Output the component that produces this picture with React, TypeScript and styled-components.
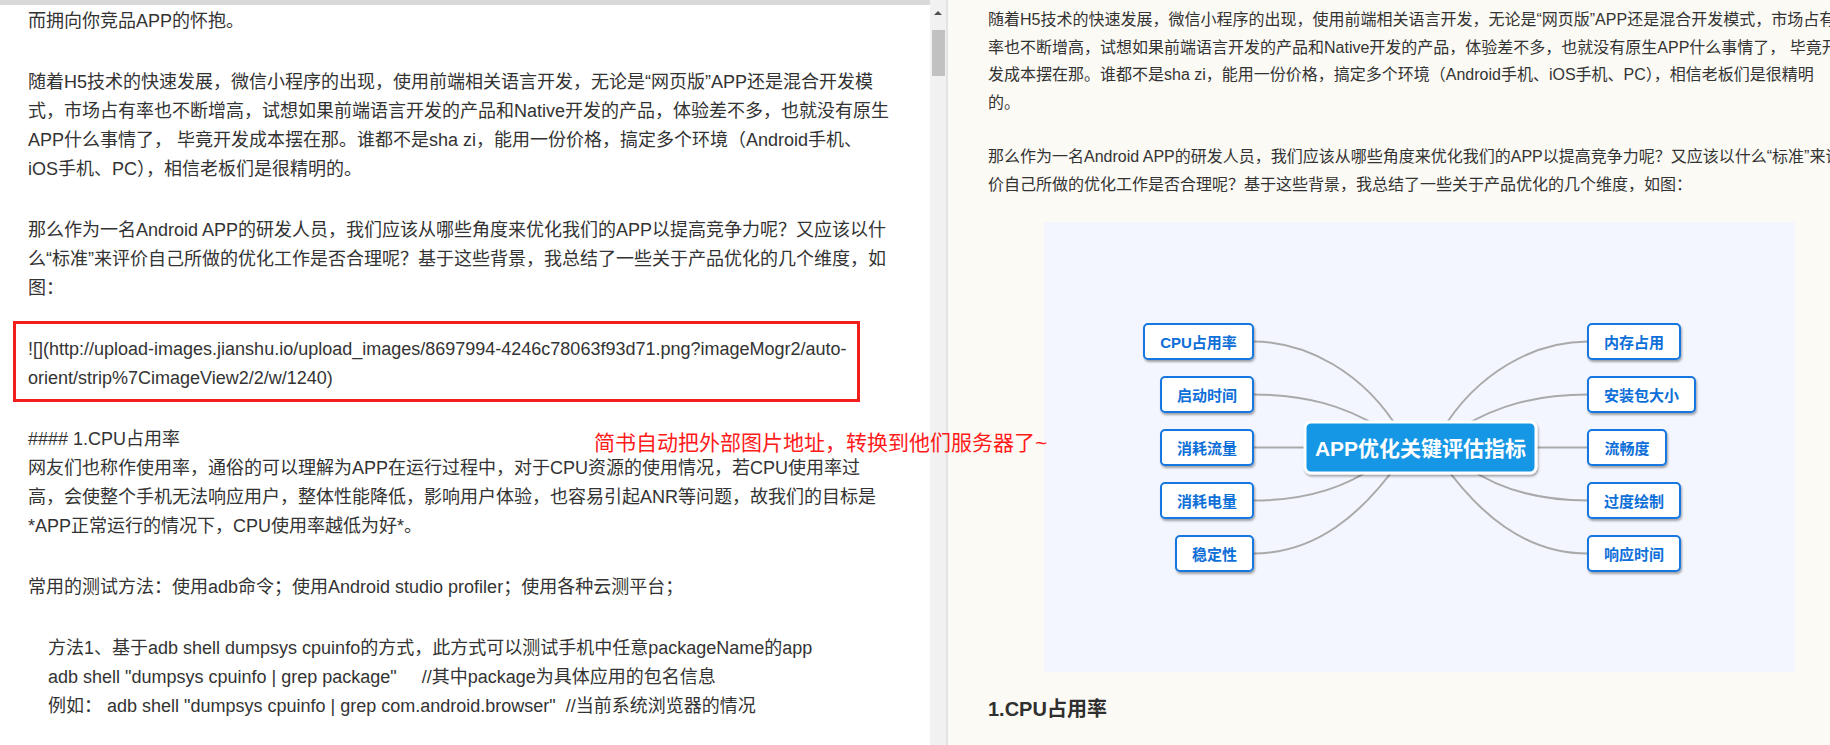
import React from 'react'
import styled, { createGlobalStyle } from 'styled-components'

const GlobalStyle = createGlobalStyle`
  html, body {
    margin: 0;
    padding: 0;
    background: #fff;
  }
  body {
    font-family: "Liberation Sans", "Noto Sans CJK SC", sans-serif;
  }
`

const editorParas: { lines: string[]; boxed?: boolean }[] = [
  { lines: ['而拥向你竞品APP的怀抱。'] },
  {
    lines: [
      '随着H5技术的快速发展，微信小程序的出现，使用前端相关语言开发，无论是“网页版”APP还是混合开发模',
      '式，市场占有率也不断增高，试想如果前端语言开发的产品和Native开发的产品，体验差不多，也就没有原生',
      'APP什么事情了， 毕竟开发成本摆在那。谁都不是sha zi，能用一份价格，搞定多个环境（Android手机、',
      'iOS手机、PC），相信老板们是很精明的。',
    ],
  },
  {
    lines: [
      '那么作为一名Android APP的研发人员，我们应该从哪些角度来优化我们的APP以提高竞争力呢？又应该以什',
      '么“标准”来评价自己所做的优化工作是否合理呢？基于这些背景，我总结了一些关于产品优化的几个维度，如',
      '图：',
    ],
  },
  {
    boxed: true,
    lines: [
      '![](http://upload-images.jianshu.io/upload_images/8697994-4246c78063f93d71.png?imageMogr2/auto-',
      'orient/strip%7CimageView2/2/w/1240)',
    ],
  },
  {
    lines: [
      '#### 1.CPU占用率',
      '网友们也称作使用率，通俗的可以理解为APP在运行过程中，对于CPU资源的使用情况，若CPU使用率过',
      '高，会使整个手机无法响应用户，整体性能降低，影响用户体验，也容易引起ANR等问题，故我们的目标是',
      '*APP正常运行的情况下，CPU使用率越低为好*。',
    ],
  },
  { lines: ['常用的测试方法：使用adb命令；使用Android studio profiler；使用各种云测平台；'] },
  {
    lines: [
      '    方法1、基于adb shell dumpsys cpuinfo的方式，此方式可以测试手机中任意packageName的app',
      '    adb shell "dumpsys cpuinfo | grep package"     //其中package为具体应用的包名信息',
      '    例如： adb shell "dumpsys cpuinfo | grep com.android.browser"  //当前系统浏览器的情况',
    ],
  },
]

const previewParas: string[][] = [
  [
    '随着H5技术的快速发展，微信小程序的出现，使用前端相关语言开发，无论是“网页版”APP还是混合开发模式，市场占有',
    '率也不断增高，试想如果前端语言开发的产品和Native开发的产品，体验差不多，也就没有原生APP什么事情了， 毕竟开',
    '发成本摆在那。谁都不是sha zi，能用一份价格，搞定多个环境（Android手机、iOS手机、PC），相信老板们是很精明',
    '的。',
  ],
  [
    '那么作为一名Android APP的研发人员，我们应该从哪些角度来优化我们的APP以提高竞争力呢？又应该以什么“标准”来评',
    '价自己所做的优化工作是否合理呢？基于这些背景，我总结了一些关于产品优化的几个维度，如图：',
  ],
]

// mind map nodes, coordinates inside the 751x450 picture
const leftNodes = [
  { label: 'CPU占用率', x: 100, y: 102, w: 109 },
  { label: '启动时间', x: 117, y: 155, w: 92 },
  { label: '消耗流量', x: 117, y: 208, w: 92 },
  { label: '消耗电量', x: 117, y: 261, w: 92 },
  { label: '稳定性', x: 132, y: 314, w: 77 },
]

const rightNodes = [
  { label: '内存占用', x: 544, y: 102, w: 92 },
  { label: '安装包大小', x: 544, y: 155, w: 107 },
  { label: '流畅度', x: 544, y: 208, w: 78 },
  { label: '过度绘制', x: 544, y: 261, w: 92 },
  { label: '响应时间', x: 544, y: 314, w: 92 },
]

const links = [
  'M209,119.5 C262,119.5 320,150 356,210',
  'M209,172.5 C262,172.5 300,184 335,205',
  'M209,225.5 L270,225.5',
  'M209,278.5 C262,278.5 300,266 330,245',
  'M209,331.5 C272,331.5 318,292 355,240',
  'M544,119.5 C491,119.5 433,150 397,210',
  'M544,172.5 C491,172.5 453,184 418,205',
  'M544,225.5 L483,225.5',
  'M544,278.5 C491,278.5 453,266 423,245',
  'M544,331.5 C481,331.5 435,292 398,240',
]

const MindMap: React.FC = () => (
  <svg width="751" height="450" viewBox="0 0 751 450">
    <defs>
      <filter id="nodeShadow" x="-20%" y="-20%" width="140%" height="160%">
        <feDropShadow dx="1" dy="2" stdDeviation="1.2" floodColor="#000" floodOpacity="0.35" />
      </filter>
    </defs>
    <rect width="751" height="450" fill="#f3f6fe" />
    {links.map((d) => (
      <path key={d} d={d} fill="none" stroke="#a9a9a9" strokeWidth="2" />
    ))}
    {[...leftNodes, ...rightNodes].map((n) => (
      <g key={n.label}>
        <rect
          x={n.x}
          y={n.y}
          width={n.w}
          height={35}
          rx={4}
          fill="#fff"
          stroke="#1677e0"
          strokeWidth="2"
          filter="url(#nodeShadow)"
        />
        <text
          x={n.x + n.w / 2}
          y={n.y + 18}
          textAnchor="middle"
          dominantBaseline="central"
          fontFamily='"Liberation Sans", "Noto Sans CJK SC", sans-serif'
          fontSize="15"
          fontWeight="bold"
          fill="#0e6fd8"
        >
          {n.label}
        </text>
      </g>
    ))}
    <rect
      x={261}
      y={200}
      width={231}
      height={51}
      rx={6}
      fill="#1597e6"
      stroke="#fff"
      strokeWidth="3"
      filter="url(#nodeShadow)"
    />
    <text
      x={376.5}
      y={226}
      textAnchor="middle"
      dominantBaseline="central"
      fontFamily='"Liberation Sans", "Noto Sans CJK SC", sans-serif'
      fontSize="21"
      fontWeight="bold"
      fill="#fff"
    >
      APP优化关键评估指标
    </text>
  </svg>
)

const App: React.FC = () => {
  return (
    <>
      <GlobalStyle />
      <StyledPage>
        <StyledEditor>
          {editorParas.map((p, i) =>
            p.boxed ? (
              <StyledLinkBox key={i}>
                {p.lines.map((l) => (
                  <StyledLine key={l}>{l}</StyledLine>
                ))}
              </StyledLinkBox>
            ) : (
              <StyledPara key={i}>
                {p.lines.map((l) => (
                  <StyledLine key={l}>{l}</StyledLine>
                ))}
              </StyledPara>
            )
          )}
        </StyledEditor>
        <StyledScrollbar>
          <StyledArrow />
          <StyledThumb />
        </StyledScrollbar>
        <StyledPreview>
          {previewParas.map((p, i) => (
            <StyledPreviewPara key={i}>
              {p.map((l) => (
                <StyledLine key={l}>{l}</StyledLine>
              ))}
            </StyledPreviewPara>
          ))}
          <StyledFigure>
            <MindMap />
          </StyledFigure>
          <StyledHeading>1.CPU占用率</StyledHeading>
        </StyledPreview>
        <StyledNote>简书自动把外部图片地址，转换到他们服务器了~</StyledNote>
      </StyledPage>
    </>
  )
}

const StyledPage = styled.div`
  position: relative;
  display: flex;
  height: 745px;
  overflow: hidden;
`

const StyledEditor = styled.div`
  width: 930px;
  flex-shrink: 0;
  box-sizing: border-box;
  border-top: 5px solid #d9d9d9;
  padding: 2px 0 0 28px;
  background: #fff;
  color: #333;
  font-size: 18px;
  line-height: 29px;
  overflow: hidden;
`

const StyledPara = styled.div`
  margin-bottom: 32px;
`

const StyledLine = styled.div`
  white-space: pre;
`

const StyledLinkBox = styled.div`
  box-sizing: border-box;
  width: 847px;
  margin: -14px 0 23px -15px;
  padding: 11px 0 6px 12px;
  border: 3px solid #f21d1d;
`

const StyledScrollbar = styled.div`
  width: 16px;
  flex-shrink: 0;
  display: flex;
  flex-direction: column;
  align-items: center;
  background: #f1f1f1;
`

const StyledArrow = styled.div`
  margin-top: 11px;
  width: 0;
  height: 0;
  border-left: 4px solid transparent;
  border-right: 4px solid transparent;
  border-bottom: 4px solid #505050;
`

const StyledThumb = styled.div`
  margin-top: 15px;
  width: 13px;
  height: 46px;
  background: #c1c1c1;
`

const StyledPreview = styled.div`
  flex: 1;
  min-width: 0;
  box-sizing: border-box;
  border-left: 2px solid #e3e3e3;
  padding: 6px 0 0 40px;
  background: #fcfaf5;
  color: #333;
  font-size: 16px;
  line-height: 27.7px;
  overflow: hidden;
`

const StyledPreviewPara = styled.div`
  & + & {
    margin-top: 26px;
  }
`

const StyledFigure = styled.div`
  width: 751px;
  height: 450px;
  margin: 24px 0 22px 56px;
  svg {
    display: block;
  }
`

const StyledHeading = styled.div`
  font-size: 20px;
  font-weight: 700;
  line-height: 30px;
  color: #2f2f2f;
`

const StyledNote = styled.div`
  position: absolute;
  left: 594px;
  top: 431px;
  color: #ff1a1a;
  font-size: 21px;
  line-height: 24px;
  white-space: nowrap;
`

export default App
